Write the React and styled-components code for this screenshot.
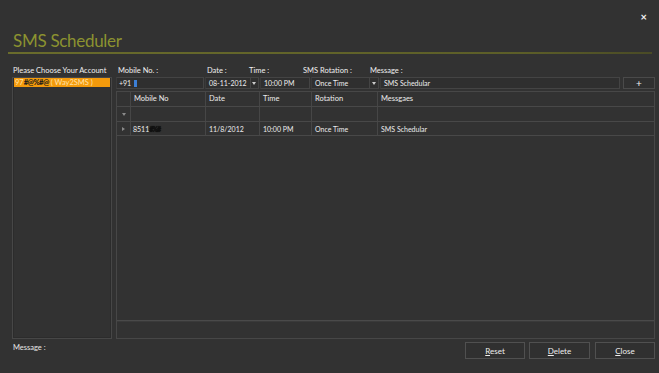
import React from "react";
import styled, { createGlobalStyle } from "styled-components";

const Global = createGlobalStyle`
  html, body { margin: 0; padding: 0; background: #323232; }
  body { font-family: Lato, "Open Sans", sans-serif; color: #e6e6e6; }
`;

const Window = styled.div`
  width: 659px;
  height: 373px;
  box-sizing: border-box;
  background: #323232;
  display: flex;
  flex-direction: column;
  padding: 0 4px 0 12px;
  overflow: hidden;
`;

const TopBar = styled.div`
  height: 28px;
  display: flex;
  justify-content: flex-end;
  align-items: flex-end;
  padding-right: 8px;
`;

const CloseX = styled.span`
  font-size: 11px;
  color: #f2f2f2;
  font-weight: bold;
  line-height: 10px;
  margin-bottom: 6px;
`;

const Title = styled.h1`
  margin: 3px 0 0 1px;
  font-family: Lato, sans-serif;
  font-weight: 400;
  font-size: 17px;
  line-height: 20px;
  color: #8c9230;
  letter-spacing: -0.3px;
`;

const Rule = styled.div`
  height: 2px;
  margin: 1px 3px 0 -4px;
  background: linear-gradient(to right, #6a6c2c, #5c5e28 80%, #4a4b26);
`;

const Body = styled.div`
  display: flex;
  gap: 4px;
  margin-top: 12px;
  height: 273px;
`;

const LeftCol = styled.div`
  width: 100px;
  display: flex;
  flex-direction: column;
`;

const Label = styled.div`
  font-size: 7.5px;
  line-height: 10px;
  height: 11px;
  color: #f0f0f0;
  white-space: nowrap;
  padding-left: ${(p) => p.$pl || 0}px;
`;

const ListBox = styled.div`
  flex: 1;
  border: 1px solid #474747;
  box-shadow: inset 0 0 0 1px #2c2c2c;
  padding: 0 1px 1px;
`;

const ListItem = styled.div`
  background: #f39a0c;
  color: #ffe2a8;
  font-size: 7.5px;
  line-height: 9px;
  height: 9px;
  padding-left: 1px;
  white-space: nowrap;
  overflow: hidden;
  span { color: #1a1a1a; font-weight: 900; letter-spacing: -0.5px; }
`;

const RightCol = styled.div`
  flex: 1;
  display: flex;
  flex-direction: column;
`;

const LabelRow = styled.div`
  display: grid;
  grid-template-columns: 89px 42px 54px 67px 1fr;
  padding-left: 2px;
`;

const InputRow = styled.div`
  display: grid;
  grid-template-columns: 88px 54px 50px 68px 1fr 34px;
  gap: 1px;
  height: 12px;
`;

const Field = styled.div`
  background: #2f2f2f;
  border: 1px solid #444;
  border-left-color: #3a3a3a;
  font-size: 7px;
  line-height: 10px;
  padding-left: ${(p) => p.$pl ?? 3}px;
  color: #eee;
  display: flex;
  align-items: center;
  gap: 3px;
  white-space: nowrap;
`;

const Caret = styled.span`
  display: inline-block;
  width: 3px;
  height: 7px;
  background: #3d7fd6;
`;

const DropArrow = styled.span`
  margin-left: auto;
  width: 8px;
  height: 100%;
  border-left: 1px solid #444;
  display: flex;
  align-items: center;
  justify-content: center;
  &::after {
    content: "";
    border-left: 2px solid transparent;
    border-right: 2px solid transparent;
    border-top: 3px solid #ccc;
  }
`;

const PlusButton = styled.div`
  border: 1px solid #4a4a4a;
  background: #303030;
  color: #f0f0f0;
  font-size: 10px;
  line-height: 10px;
  display: flex;
  align-items: center;
  justify-content: center;
  margin-left: 2px;
`;

const Grid = styled.div`
  margin-top: 2px;
  flex: 1;
  border: 1px solid #474747;
  display: flex;
  flex-direction: column;
  background: #323232;
`;

const Row = styled.div`
  display: grid;
  grid-template-columns: 14px 75px 54px 52px 66px 1fr;
  height: ${(p) => p.$h || 13}px;
  border-bottom: 1px solid #484848;
`;

const Cell = styled.div`
  border-right: 1px solid #464646;
  font-size: ${(p) => (p.$head ? 7.5 : 7)}px;
  line-height: 12px;
  padding-left: ${(p) => p.$pl ?? 3}px;
  color: #ececec;
  white-space: nowrap;
  overflow: hidden;
  display: flex;
  align-items: center;
  &:last-child { border-right: none; }
`;

const FilterMark = styled.span`
  display: inline-block;
  border-left: 2px solid transparent;
  border-right: 2px solid transparent;
  border-top: 3px solid #8a8a8a;
`;

const RowMark = styled.span`
  display: inline-block;
  border-top: 2px solid transparent;
  border-bottom: 2px solid transparent;
  border-left: 3px solid #8a8a8a;
`;

const Scribble = styled.span`
  color: #111;
  font-weight: 900;
  letter-spacing: -1px;
  text-shadow: 0 0 1px #000;
`;

const Spacer = styled.div`
  flex: 1;
`;

const GridFooter = styled.div`
  height: 17px;
  border-top: 1px solid #4a4a4a;
  box-shadow: inset 0 1px 0 #3a3a3a;
`;

const Footer = styled.div`
  display: flex;
  align-items: center;
  margin-top: 3px;
  height: 17px;
`;

const FooterLabel = styled.div`
  font-size: 7.5px;
  color: #e8e8e8;
  margin-top: -7px;
  flex: 1;
  padding-left: 1px;
`;

const Button = styled.button`
  width: ${(p) => p.$w || 60}px;
  height: 17px;
  margin-left: ${(p) => p.$ml || 0}px;
  background: #303030;
  border: 1px solid #505050;
  color: #eee;
  font-family: Lato, sans-serif;
  font-size: 8px;
  padding: 0;
  u { text-decoration: underline; }
`;

export default function App() {
  return (
    <>
      <Global />
      <Window>
        <TopBar>
          <CloseX>×</CloseX>
        </TopBar>
        <Title>SMS Scheduler</Title>
        <Rule />
        <Body>
          <LeftCol>
            <Label $pl={1}>Please Choose Your Account</Label>
            <ListBox>
              <ListItem>
                97<span>#@%#@</span> ( Way2SMS )
              </ListItem>
            </ListBox>
          </LeftCol>
          <RightCol>
            <LabelRow>
              <Label>Mobile No. :</Label>
              <Label>Date :</Label>
              <Label>Time :</Label>
              <Label>SMS Rotation :</Label>
              <Label>Message :</Label>
            </LabelRow>
            <InputRow>
              <Field $pl={2}>
                +91 <Caret />
              </Field>
              <Field>
                08-11-2012
                <DropArrow />
              </Field>
              <Field>10:00 PM</Field>
              <Field>
                Once Time
                <DropArrow />
              </Field>
              <Field>SMS Schedular</Field>
              <PlusButton>+</PlusButton>
            </InputRow>
            <Grid>
              <Row $h={14}>
                <Cell $head />
                <Cell $head>Mobile No</Cell>
                <Cell $head>Date</Cell>
                <Cell $head>Time</Cell>
                <Cell $head>Rotation</Cell>
                <Cell $head>Messgaes</Cell>
              </Row>
              <Row $h={14}>
                <Cell $pl={5}>
                  <FilterMark />
                </Cell>
                <Cell />
                <Cell />
                <Cell />
                <Cell />
                <Cell />
              </Row>
              <Row $h={13}>
                <Cell $pl={5}>
                  <RowMark />
                </Cell>
                <Cell $pl={2}>
                  8511<Scribble>#%#</Scribble>
                </Cell>
                <Cell>11/8/2012</Cell>
                <Cell>10:00 PM</Cell>
                <Cell>Once Time</Cell>
                <Cell>SMS Schedular</Cell>
              </Row>
              <Spacer />
              <GridFooter />
            </Grid>
          </RightCol>
        </Body>
        <Footer>
          <FooterLabel>Message :</FooterLabel>
          <Button $w={60}>
            <u>R</u>eset
          </Button>
          <Button $w={61} $ml={4}>
            <u>D</u>elete
          </Button>
          <Button $w={60} $ml={5}>
            <u>C</u>lose
          </Button>
        </Footer>
      </Window>
    </>
  );
}
